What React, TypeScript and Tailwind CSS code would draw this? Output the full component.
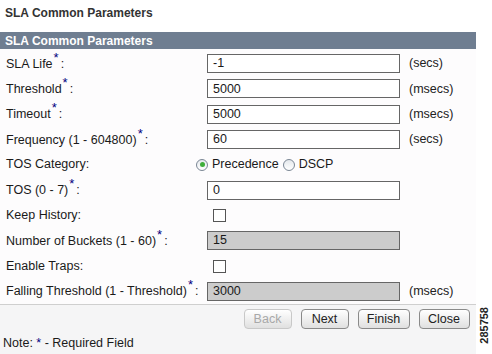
import React from "react";

type Row = {
  label: string;
  required?: boolean;
  kind: "text" | "check" | "radio";
  value?: string;
  unit?: string;
  disabled?: boolean;
};

const rows: Row[] = [
  { label: "SLA Life", required: true, kind: "text", value: "-1", unit: "(secs)" },
  { label: "Threshold", required: true, kind: "text", value: "5000", unit: "(msecs)" },
  { label: "Timeout", required: true, kind: "text", value: "5000", unit: "(msecs)" },
  { label: "Frequency (1 - 604800)", required: true, kind: "text", value: "60", unit: "(secs)" },
  { label: "TOS Category", kind: "radio" },
  { label: "TOS (0 - 7)", required: true, kind: "text", value: "0" },
  { label: "Keep History", kind: "check" },
  { label: "Number of Buckets (1 - 60)", required: true, kind: "text", value: "15", disabled: true },
  { label: "Enable Traps", kind: "check" },
  { label: "Falling Threshold (1 - Threshold)", required: true, kind: "text", value: "3000", unit: "(msecs)", disabled: true },
];

const Radio = ({ checked }: { checked?: boolean }) => (
  <span className="inline-flex w-[12px] h-[12px] rounded-full border border-[#7a8694] bg-gradient-to-b from-[#e4e8ec] to-white items-center justify-center">
    {checked && <span className="w-[5px] h-[5px] rounded-full bg-[#3fae3a]" />}
  </span>
);

const Btn = ({ label, w, disabled }: { label: string; w: string; disabled?: boolean }) => (
  <button
    className={`${w} h-[20px] rounded-[4px] border text-[12.5px] leading-none bg-gradient-to-b from-white to-[#e0e0e0] ${
      disabled ? "border-[#c8c8c8] text-[#a8a8a8]" : "border-[#8a8a8a] text-[#222]"
    }`}
  >
    {label}
  </button>
);

export default function App() {
  return (
    <div className="w-[492px] h-[354px] bg-white flex font-['Liberation_Sans',Arial,sans-serif] text-[12.5px] text-[#1a1a1a] overflow-hidden">
      <div className="w-[478px] flex flex-col">
        <div className="h-[32px] flex items-center px-[5px] pb-[6px] font-bold text-[12px] text-[#333]">
          SLA Common Parameters
        </div>
        <div className="h-[17px] bg-[#6f7e91] text-white text-[12px] font-bold flex items-center px-[5px]">
          SLA Common Parameters
        </div>
        <div className="bg-[#fdfcfd] pt-[2px]">
          {rows.map((r) => (
            <div key={r.label} className="h-[25.3px] flex items-center">
              <div className="w-[207px] pl-[6px] whitespace-nowrap">
                {r.label}
                {r.required && (
                  <span className="text-[#000080] text-[13px] relative top-[-6px] ml-[1px] mr-[2px]">*</span>
                )}
                :
              </div>
              {r.kind === "text" && (
                <div
                  className={`w-[193px] h-[19px] border border-[#666] flex items-center px-[5px] ${
                    r.disabled ? "bg-[#cccccc]" : "bg-white"
                  }`}
                >
                  {r.value}
                </div>
              )}
              {r.kind === "check" && (
                <span className="ml-[6px] w-[13px] h-[13px] border border-[#555] bg-white" />
              )}
              {r.kind === "radio" && (
                <div className="flex items-center gap-[4px] -ml-[11px]">
                  <Radio checked />
                  <span>Precedence</span>
                  <Radio />
                  <span>DSCP</span>
                </div>
              )}
              {r.unit && <span className="ml-[9px] text-[#222]">{r.unit}</span>}
            </div>
          ))}
        </div>
        <div className="flex-1 bg-[#f5f5f6] border-t border-[#cfcfcf] flex flex-col">
          <div className="flex justify-end gap-[9px] pr-[6px] pt-[4px]">
            <Btn label="Back" w="w-[48px]" disabled />
            <Btn label="Next" w="w-[48px]" />
            <Btn label="Finish" w="w-[52px]" />
            <Btn label="Close" w="w-[51px]" />
          </div>
          <div className="pl-[3px] mt-[5px]">
            Note: <span className="text-[#000080]">*</span> - Required Field
          </div>
        </div>
      </div>
      <div className="flex-1 flex items-end justify-center pb-[8px]">
        <span className="[writing-mode:vertical-rl] rotate-180 font-bold text-[11px] text-[#222] mb-[2px]">285758</span>
      </div>
    </div>
  );
}
